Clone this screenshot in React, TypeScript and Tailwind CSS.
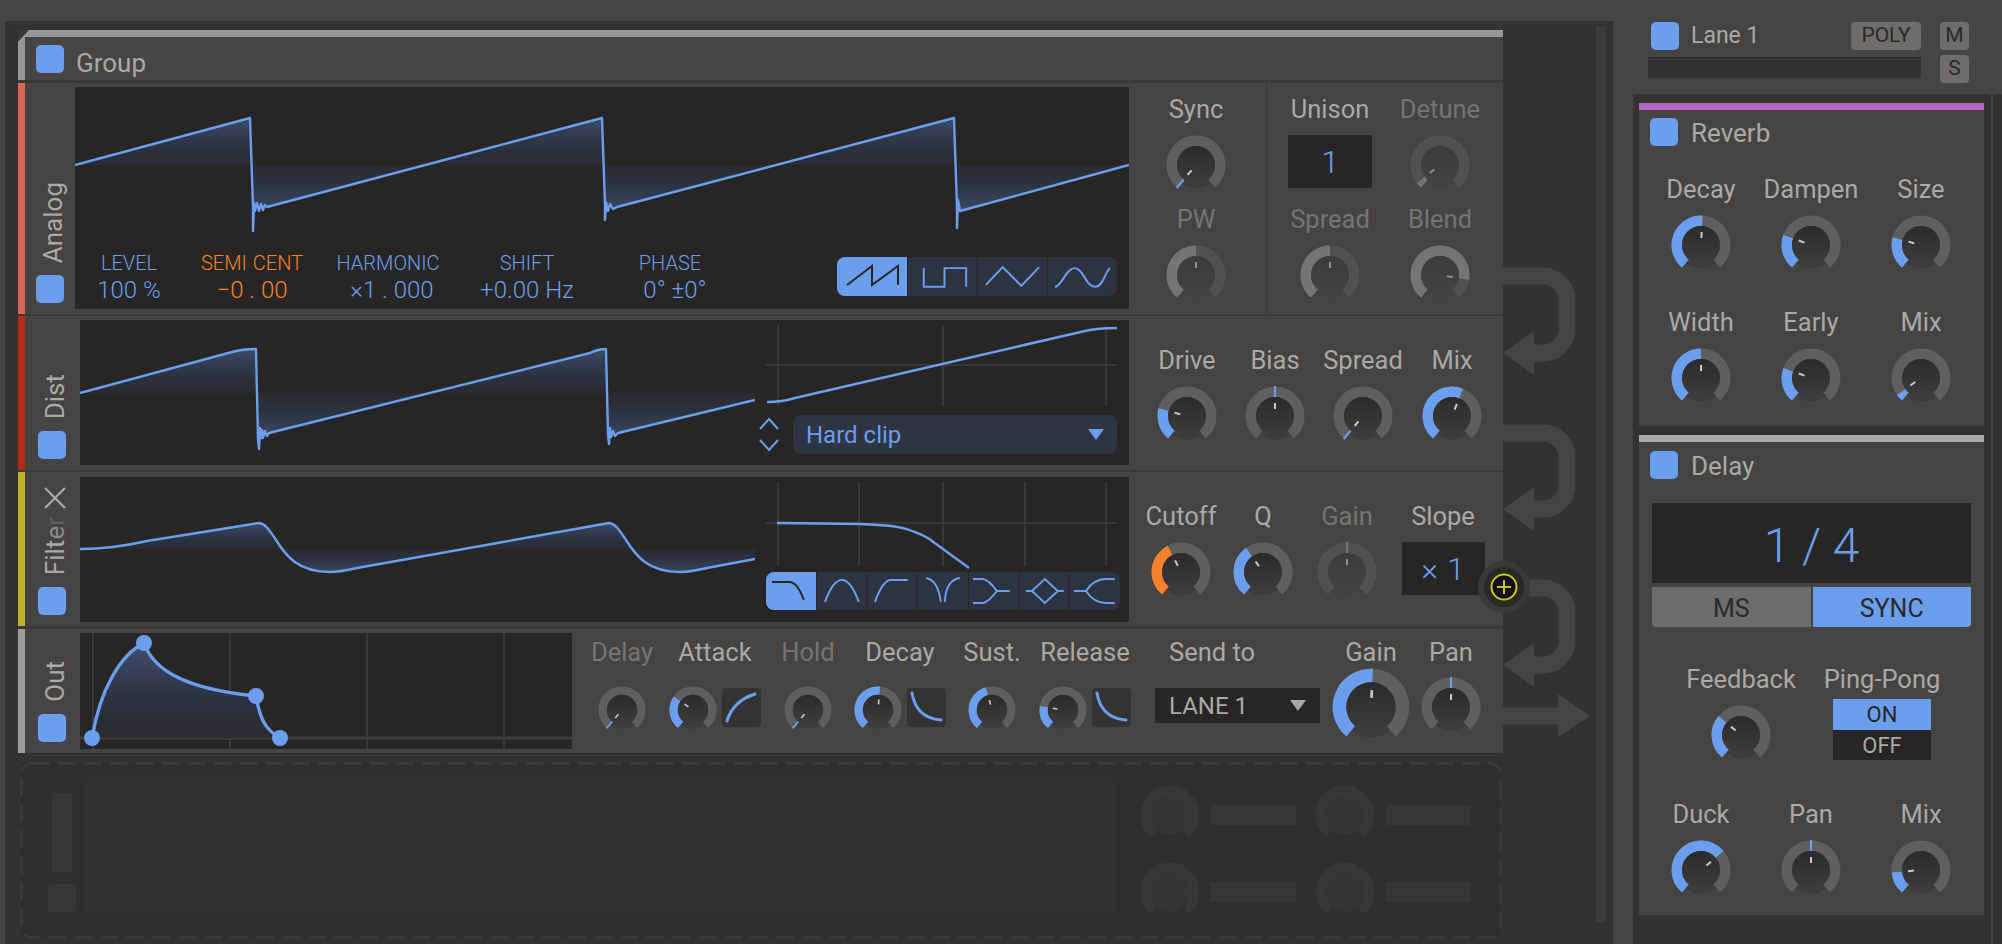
import { useId } from "react"

const BLUE = "#6b9eed"
const ORANGE = "#f5812b"
const DARK = "#272625"

function polar(r: number, deg: number) {
  const a = (deg * Math.PI) / 180
  return [r * Math.sin(a), -r * Math.cos(a)]
}

function arc(r: number, from: number, to: number) {
  const [x1, y1] = polar(r, from)
  const [x2, y2] = polar(r, to)
  const large = Math.abs(to - from) > 180 ? 1 : 0
  return `M${x1} ${y1} A${r} ${r} 0 ${large} 1 ${x2} ${y2}`
}

type Tone = "blue" | "orange" | "dim" | "ghost"

interface KnobProps {
  to?: number
  from?: number
  tone?: Tone
  tick?: boolean
  size?: "sm" | "md" | "lg"
}

function Knob({ to = -140, from = -140, tone = "blue", tick = false, size = "md" }: KnobProps) {
  const id = useId()
  const sizes = { sm: "w-[48px] h-[48px]", md: "w-[60px] h-[60px]", lg: "w-[78px] h-[78px]" }
  const dim = tone === "dim"
  const ghost = tone === "ghost"
  const track = ghost ? "#383736" : dim ? "#525150" : "#605f5e"
  const value = tone === "orange" ? ORANGE : dim ? "#767574" : BLUE
  const [t1x, t1y] = polar(7, to)
  const [t2x, t2y] = polar(13, to)
  const [m1x, m1y] = polar(19, to)
  const [m2x, m2y] = polar(30, to)
  return (
    <svg viewBox="-30 -30 60 60" className={`${sizes[size]} shrink-0 overflow-visible`}>
      <defs>
        <linearGradient id={id} x1="0" y1="0" x2="0" y2="1">
          <stop offset="0" stopColor={dim ? "#3c3b3a" : "#2c2b2b"} />
          <stop offset="1" stopColor={dim ? "#444342" : "#3d3c3b"} />
        </linearGradient>
      </defs>
      {ghost ? (
        <>
          <path d={arc(24.25, -140, 140)} fill="none" stroke={track} strokeWidth="10.5" />
          <circle r="20" fill="#363534" />
        </>
      ) : (
        <>
          <circle cy="1" r="22.5" fill={dim ? "#434241" : "#3d3c3b"} />
          <path d={arc(24.25, -140, 140)} fill="none" stroke={track} strokeWidth="10.5" />
          {!tick && to > from && <path d={arc(24.25, from, to)} fill="none" stroke={value} strokeWidth="10.5" />}
          {tick && <line x1={m1x} y1={m1y} x2={m2x} y2={m2y} stroke={value} strokeWidth="2.2" />}
          <circle r="19" fill={`url(#${id})`} />
          <line x1={t1x} y1={t1y} x2={t2x} y2={t2y} stroke={dim ? "#8f8f8d" : "#c9c9c7"} strokeWidth="2" />
        </>
      )}
    </svg>
  )
}

function Check() {
  return <div className="w-[28px] h-[28px] shrink-0 rounded-[5px] bg-[#6b9eed]" />
}

function Label({ text, dim = false }: { text: string; dim?: boolean }) {
  return (
    <div className={`h-[30px] leading-[30px] text-[25.5px] whitespace-nowrap ${dim ? "text-[#757473]" : "text-[#a9a9a7]"}`}>
      {text}
    </div>
  )
}

function KnobCell({ label, dim = false, width, ...knob }: KnobProps & { label: string; dim?: boolean; width?: string }) {
  return (
    <div className={`flex flex-col items-center ${width ?? ""}`}>
      <Label text={label} dim={dim} />
      <div className="mt-[11px]">
        <Knob {...knob} />
      </div>
    </div>
  )
}

interface WaveProps {
  box: string
  d: string
  x0: number
  x1: number
  mid: number
  top: number
  bottom: number
  className: string
}

function Wave({ box, d, x0, x1, mid, top, bottom, className }: WaveProps) {
  const id = useId()
  const m = (mid - top) / (bottom - top)
  return (
    <svg viewBox={box} className={`block ${className}`}>
      <defs>
        <linearGradient id={id} gradientUnits="userSpaceOnUse" x1="0" y1={top} x2="0" y2={bottom}>
          <stop offset="0" stopColor="#3b4a66" />
          <stop offset={m * 0.6} stopColor="#2c3241" />
          <stop offset={m} stopColor="#2a2b2f" />
          <stop offset={m + (1 - m) * 0.4} stopColor="#2c3241" />
          <stop offset="1" stopColor="#3b4a66" />
        </linearGradient>
      </defs>
      <path d={`${d} L${x1} ${mid} L${x0} ${mid} Z`} fill={`url(#${id})`} />
      <path d={d} fill="none" stroke={BLUE} strokeWidth="2.4" strokeLinejoin="round" />
    </svg>
  )
}

function Readout({ label, value, width, accent = "text-[#6b9eed]", nudge = "" }: { label: React.ReactNode; value: string; width: string; accent?: string; nudge?: string }) {
  return (
    <div className={`${width} flex flex-col items-center font-light whitespace-pre ${accent}`}>
      <div className="h-[20px] leading-[20px] text-[20px]">{label}</div>
      <div className={`mt-[5px] h-[24px] leading-[24px] text-[24px] ${nudge}`}>{value}</div>
    </div>
  )
}

const waveIcons = [
  "M10 28 L35 9 V28 L61 9 V28",
  "M16 11 V30 H37 V11 H59 V30",
  "M8 28 L25 10 L44 29 L62 10",
  "M7 30 C14 30 18 11 27 11 C36 11 38 30 48 30 C56 30 58 14 63 11",
]

const filterIcons = [
  "M6 10 H24 Q32 11 38 28",
  "M8 30 Q16 8 25 8 Q34 8 42 30",
  "M8 30 Q16 8 24 8 H41",
  "M8 6 Q20 8 23 30 M42 6 Q28 8 27 30",
  "M4 7 H14 Q20 8 28 19 H41 M4 31 H14 Q20 30 28 19",
  "M6 19 H12 L25 7 L38 19 H44 M12 19 L25 31 L38 19",
  "M4 19 H16 Q24 7 36 7 H45 M16 19 Q24 31 36 31 H45",
]

function WaveButtons() {
  return (
    <div className="ml-auto mr-[12px] mt-[4px] flex h-[39px] w-[280px] overflow-hidden rounded-[8px] bg-[#2e3342]">
      {waveIcons.map((d, i) => (
        <div key={d} className={`h-full w-[70px] ${i === 0 ? "bg-[#6b9eed]" : "border-l border-[#272625]"}`}>
          <svg viewBox="0 0 70 39" className="h-full w-full">
            <path d={d} fill="none" stroke={i === 0 ? DARK : BLUE} strokeWidth="2" />
          </svg>
        </div>
      ))}
    </div>
  )
}

function FilterButtons() {
  return (
    <div className="ml-[11px] mt-[2px] flex h-[38px] w-[354px] overflow-hidden rounded-[8px] bg-[#2e3342]">
      {filterIcons.map((d, i) => (
        <div key={d} className={`h-full flex-1 ${i === 0 ? "bg-[#6b9eed]" : "border-l border-[#272625]"}`}>
          <svg viewBox="0 0 50 38" className="h-full w-full">
            <path d={d} fill="none" stroke={i === 0 ? DARK : BLUE} strokeWidth="2" />
          </svg>
        </div>
      ))}
    </div>
  )
}

function CurveButton({ d }: { d: string }) {
  return (
    <div className="h-[39px] w-[39px] rounded-[4px] bg-[#343332]">
      <svg viewBox="0 0 39 39" className="h-full w-full">
        <path d={d} fill="none" stroke={BLUE} strokeWidth="3" strokeLinecap="round" />
      </svg>
    </div>
  )
}

function Side({ width, children }: { width: string; children: React.ReactNode }) {
  return <div className={`${width} flex shrink-0 flex-col items-center justify-end pb-[11px] pr-[1px]`}>{children}</div>
}

function SideText({ children }: { children: React.ReactNode }) {
  return (
    <div className="mb-[12px] ml-[6px] rotate-180 text-[26px] leading-[28px] text-[#a9a9a7] [writing-mode:vertical-rl]">
      {children}
    </div>
  )
}

function Arrow({ top, bottom, right = 1567 }: { top: number; bottom: number; right?: number }) {
  const r = 24
  return (
    <>
      <path
        d={`M1503 ${top} H${right - r} A${r} ${r} 0 0 1 ${right} ${top + r} V${bottom - r} A${r} ${r} 0 0 1 ${right - r} ${bottom} H1530`}
        fill="none"
        stroke="#454443"
        strokeWidth="17"
      />
      <polygon points={`1503,${bottom} 1534,${bottom - 22} 1534,${bottom + 22}`} fill="#454443" />
    </>
  )
}

function GhostRow() {
  return (
    <div className="flex items-center">
      <Knob tone="ghost" />
      <div className="ml-[11px] h-[20px] w-[85px] bg-[#373635]" />
    </div>
  )
}

export default function App() {
  return (
    <div className="flex h-[944px] w-[2002px] overflow-hidden bg-[#454443] font-['Roboto',sans-serif]">
      {/* left: the group and its routing */}
      <div className="flex w-[1613px] shrink-0 flex-col">
        <div className="h-[21px] shrink-0" />
        <div className="ml-[5px] flex flex-1 bg-[#333231]">
          <div className="ml-[13px] mt-[9px] flex w-[1485px] shrink-0 flex-col">
            <div className="bg-[#3a3938]">
              <div className="flex h-[50px] items-start gap-[12px] border-l-[7px] border-t-[7px] border-[#989897] bg-[#464544] pl-[11px] pt-[8px] [clip-path:polygon(11px_0,100%_0,100%_100%,0_100%,0_12px)]">
                <Check />
                <div className="text-[26px] leading-[36px] text-[#a9a9a7]">Group</div>
              </div>

              {/* Analog */}
              <div className="mt-[3px] flex h-[231px] bg-[#454443]">
                <div className="w-[7px] shrink-0 bg-[#d9675c]" />
                <Side width="w-[50px]">
                  <SideText>Analog</SideText>
                  <Check />
                </Side>
                <div className="mt-[4px] h-[222px] w-[1054px] shrink-0 bg-[#272625]">
                  <Wave
                    box="75 87 1054 166"
                    className="h-[166px] w-[1054px]"
                    x0={75}
                    x1={1129}
                    mid={165}
                    top={118}
                    bottom={212}
                    d="M75 165 L250 118 L253 207 L253 231 L254 203 L255 211 L257 203 L259 211 L261 204 L263 210 L265 205 L267 207 L602 118 L605 205 L605 220 L606 202 L608 211 L610 204 L613 209 L617 207 L954 118 L957 208 L957 228 L958 200 L960 211 L1129 165"
                  />
                  <div className="flex h-[56px]">
                    <Readout width="w-[108px]" label="LEVEL" value="100 %" />
                    <Readout
                      width="w-[138px]"
                      accent="text-[#f5812b]"
                      label={
                        <span className="flex gap-[6px]">
                          <span>SEMI</span>
                          <span>CENT</span>
                        </span>
                      }
                      value="−0 . 00"
                    />
                    <Readout width="w-[134px]" label="HARMONIC" value="×1 . 000" nudge="ml-[8px]" />
                    <Readout width="w-[144px]" label="SHIFT" value="+0.00 Hz" />
                    <Readout width="w-[142px]" label="PHASE" value="0° ±0°" nudge="ml-[10px]" />
                    <WaveButtons />
                  </div>
                </div>
                <div className="flex w-[134px] flex-col items-center pt-[11px]">
                  <KnobCell label="Sync" tick />
                  <div className="mt-[9px]">
                    <KnobCell label="PW" dim tone="dim" to={0} />
                  </div>
                </div>
                <div className="ml-[3px] h-full w-px bg-[#393837]" />
                <div className="flex w-[126px] flex-col items-center pt-[11px]">
                  <Label text="Unison" />
                  <div className="mb-[7px] mt-[11px] flex h-[53px] w-[84px] items-center justify-center bg-[#272625] text-[32px] font-light text-[#6b9eed]">
                    1
                  </div>
                  <div className="mt-[9px]">
                    <KnobCell label="Spread" dim tone="dim" to={0} />
                  </div>
                </div>
                <div className="flex w-[94px] flex-col items-center pt-[11px]">
                  <KnobCell label="Detune" dim tone="dim" to={-128} />
                  <div className="mt-[9px]">
                    <KnobCell label="Blend" dim tone="dim" to={100} />
                  </div>
                </div>
              </div>

              {/* Dist */}
              <div className="mt-[2px] flex h-[154px] bg-[#454443]">
                <div className="w-[7px] shrink-0 bg-[#b22b14]" />
                <Side width="w-[55px]">
                  <SideText>Dist</SideText>
                  <Check />
                </Side>
                <div className="mt-[4px] flex h-[145px] w-[1049px] shrink-0 bg-[#272625]">
                  <Wave
                    box="80 320 675 145"
                    className="h-[145px] w-[675px] shrink-0"
                    x0={80}
                    x1={755}
                    mid={393}
                    top={349}
                    bottom={440}
                    d="M80 393 L232 352 Q242 349 256 349 L258 440 L259 449 L260 428 L261 438 L262 430 L263 438 L265 431 L267 436 L269 433 L590 353 Q598 349 606 349 L608 435 L609 444 L610 428 L611 437 L613 431 L615 436 L618 433 L755 400"
                  />
                  <div className="flex flex-1 flex-col">
                    <svg viewBox="755 320 374 92" className="block h-[92px] w-[374px]">
                      <path d="M778 325 V406 M943 325 V406 M1106 325 V406 M766 365 H1117" stroke="#403f3e" strokeWidth="1.5" />
                      <path d="M767 402 Q782 402 795 398 L1085 331 Q1097 328 1117 328" fill="none" stroke={BLUE} strokeWidth="2.6" />
                    </svg>
                    <div className="mt-[3px] flex h-[39px] items-center">
                      <svg viewBox="0 0 38 39" className="h-[39px] w-[38px] shrink-0">
                        <path d="M5 15 L14 5 L23 15 M5 26 L14 36 L23 26" fill="none" stroke={BLUE} strokeWidth="2" transform="translate(0 -1)" />
                      </svg>
                      <div className="flex h-[39px] w-[324px] items-center justify-between rounded-[8px] bg-[#2f3443] pl-[13px] pr-[13px]">
                        <span className="text-[24px] text-[#6b9eed]">Hard clip</span>
                        <svg viewBox="0 0 16 11" className="h-[11px] w-[16px]">
                          <polygon points="0,0 16,0 8,11" fill={BLUE} />
                        </svg>
                      </div>
                    </div>
                  </div>
                </div>
                <div className="ml-[14px] flex pt-[29px]">
                  <KnobCell label="Drive" width="w-[88px]" to={-75} />
                  <KnobCell label="Bias" width="w-[88px]" to={0} tick />
                  <KnobCell label="Spread" width="w-[88px]" to={-140} tick />
                  <KnobCell label="Mix" width="w-[90px]" from={-140} to={22} />
                </div>
              </div>

              {/* Filter */}
              <div className="relative mt-[2px] flex h-[154px] bg-[#454443]">
                <div className="w-[7px] shrink-0 bg-[#c4b12a]" />
                <Side width="w-[55px]">
                  <svg viewBox="0 0 22 22" className="mb-[8px] ml-[6px] h-[22px] w-[22px]">
                    <path d="M1 1 L21 21 M21 1 L1 21" stroke="#a9a9a7" strokeWidth="2.2" />
                  </svg>
                  <SideText>
                    Filt<span className="text-[#8b8a89]">e</span>
                    <span className="text-[#5f5e5d]">r</span>
                  </SideText>
                  <Check />
                </Side>
                <div className="mt-[5px] flex h-[145px] w-[1049px] shrink-0 bg-[#272625]">
                  <Wave
                    box="80 477 675 145"
                    className="h-[145px] w-[675px] shrink-0"
                    x0={80}
                    x1={755}
                    mid={549}
                    top={523}
                    bottom={575}
                    d="M80 549 C105 549 125 546 147 541 L259 523 C266 524 270 531 276 540 C286 556 298 572 330 572 C340 572 348 570 357 568 L609 523 C616 524 620 531 626 540 C636 556 648 572 680 572 C690 572 698 570 707 568 L755 559"
                  />
                  <div className="flex flex-1 flex-col">
                    <svg viewBox="755 477 374 93" className="block h-[93px] w-[374px]">
                      <path d="M778 482 V566 M859 482 V566 M943 482 V566 M1025 482 V566 M1106 482 V566 M766 523 H1117" stroke="#403f3e" strokeWidth="1.5" />
                      <path d="M777 523 L860 524 C885 525 900 526 912 531 C920 534 926 536 932 541 L969 568" fill="none" stroke={BLUE} strokeWidth="2.4" />
                    </svg>
                    <FilterButtons />
                  </div>
                </div>
                <div className="ml-[11px] flex pt-[29px]">
                  <KnobCell label="Cutoff" width="w-[82px]" tone="orange" to={-27} />
                  <KnobCell label="Q" width="w-[82px]" to={-35} />
                  <KnobCell label="Gain" dim width="w-[86px]" tone="dim" to={0} tick />
                  <div className="flex w-[106px] flex-col items-center">
                    <Label text="Slope" />
                    <div className="mt-[11px] flex h-[53px] w-[83px] items-center justify-center gap-[9px] bg-[#272625] text-[32px] font-light text-[#6b9eed]">
                      <span>×</span>
                      <span>1</span>
                    </div>
                  </div>
                </div>
                <svg viewBox="-26 -26 52 52" className="absolute right-[-27px] top-[89px] h-[52px] w-[52px]">
                  <circle r="26" fill="#3a3938" />
                  <circle r="20" fill="#2a2928" />
                  <circle r="12.5" fill="#111" stroke="#c9c42b" strokeWidth="2" />
                  <path d="M-7 0 H7 M0 -7 V7" stroke="#c9c42b" strokeWidth="2" />
                </svg>
              </div>

              {/* Out */}
              <div className="mt-[3px] flex h-[124px] bg-[#454443]">
                <div className="w-[7px] shrink-0 bg-[#9c9c9a]" />
                <Side width="w-[55px]">
                  <SideText>Out</SideText>
                  <Check />
                </Side>
                <div className="mt-[4px] h-[116px] w-[492px] shrink-0 bg-[#272625]">
                  <svg viewBox="80 633 492 116" className="block h-[116px] w-[492px]">
                    <defs>
                      <linearGradient id="env" gradientUnits="userSpaceOnUse" x1="0" y1="643" x2="0" y2="738">
                        <stop offset="0" stopColor="#3f4f6e" />
                        <stop offset="0.55" stopColor="#2d3343" />
                        <stop offset="1" stopColor="#2a2b2f" />
                      </linearGradient>
                    </defs>
                    <path d="M93 633 V749 M230 633 V749 M367 633 V749 M504 633 V749" stroke="#403f3e" strokeWidth="1.5" />
                    <path d="M80 738 H572" stroke="#403f3e" strokeWidth="3" />
                    <path d="M92 738 C100 690 120 655 144 643 C152 665 175 688 256 696 C260 720 266 730 280 738 Z" fill="url(#env)" />
                    <path d="M92 738 C100 690 120 655 144 643 C152 665 175 688 256 696 C260 720 266 730 280 738" fill="none" stroke={BLUE} strokeWidth="3.4" />
                    <circle cx="92" cy="738" r="8" fill={BLUE} />
                    <circle cx="144" cy="643" r="8" fill={BLUE} />
                    <circle cx="256" cy="696" r="8" fill={BLUE} />
                    <circle cx="280" cy="738" r="8" fill={BLUE} />
                  </svg>
                </div>
                <div className="flex pt-[8px]">
                  <div className="ml-[26px] flex w-[48px] flex-col items-center">
                    <Label text="Delay" dim />
                    <div className="flex h-[80px] items-center pt-[5px]">
                      <Knob size="sm" tick />
                    </div>
                  </div>
                  <div className="ml-[23px] flex w-[92px] flex-col items-center">
                    <Label text="Attack" />
                    <div className="flex h-[80px] items-center gap-[5px]">
                      <div className="pt-[5px]">
                        <Knob size="sm" to={-55} />
                      </div>
                      <CurveButton d="M5 33 Q11 13 33 6" />
                    </div>
                  </div>
                  <div className="ml-[23px] flex w-[48px] flex-col items-center">
                    <Label text="Hold" dim />
                    <div className="flex h-[80px] items-center pt-[5px]">
                      <Knob size="sm" tick />
                    </div>
                  </div>
                  <div className="ml-[22px] flex w-[92px] flex-col items-center">
                    <Label text="Decay" />
                    <div className="flex h-[80px] items-center gap-[5px]">
                      <div className="pt-[5px]">
                        <Knob size="sm" to={5} />
                      </div>
                      <CurveButton d="M5 5 Q9 30 34 32" />
                    </div>
                  </div>
                  <div className="ml-[22px] flex w-[48px] flex-col items-center">
                    <Label text="Sust." />
                    <div className="flex h-[80px] items-center pt-[5px]">
                      <Knob size="sm" to={-15} />
                    </div>
                  </div>
                  <div className="ml-[23px] flex w-[92px] flex-col items-center">
                    <Label text="Release" />
                    <div className="flex h-[80px] items-center gap-[5px]">
                      <div className="pt-[5px]">
                        <Knob size="sm" to={-80} />
                      </div>
                      <CurveButton d="M5 5 Q9 30 34 32" />
                    </div>
                  </div>
                  <div className="ml-[24px] flex w-[165px] flex-col items-start">
                    <div className="ml-[14px]">
                      <Label text="Send to" />
                    </div>
                    <div className="mt-[21px] flex h-[35px] w-[165px] items-center justify-between bg-[#272625] pl-[14px] pr-[14px]">
                      <span className="text-[24px] text-[#a9a9a7]">LANE 1</span>
                      <svg viewBox="0 0 16 11" className="h-[11px] w-[16px]">
                        <polygon points="0,0 16,0 8,11" fill="#a9a9a7" />
                      </svg>
                    </div>
                  </div>
                  <div className="ml-[12px] flex w-[78px] flex-col items-center">
                    <Label text="Gain" />
                    <div className="flex h-[80px] items-center">
                      <Knob size="lg" to={3} />
                    </div>
                  </div>
                  <div className="ml-[11px] flex w-[60px] flex-col items-center">
                    <Label text="Pan" />
                    <div className="flex h-[80px] items-center">
                      <Knob to={0} tick />
                    </div>
                  </div>
                </div>
              </div>
            </div>

            {/* empty slot */}
            <div className="relative ml-[2px] mt-[9px] flex h-[177px] w-[1482px] bg-[#302f2e] pt-[15px]">
              <svg className="absolute inset-0 h-full w-full">
                <rect x="1.5" y="1.5" width="1479" height="174" rx="10" fill="none" stroke="#3b3a39" strokeWidth="3" strokeDasharray="18 8" />
              </svg>
              <div className="ml-[18px] flex w-[47px] flex-col items-center">
                <div className="ml-[1px] mt-[16px] h-[79px] w-[20px] bg-[#383736]" />
                <div className="mt-[12px] h-[28px] w-[28px] rounded-[4px] bg-[#383736]" />
              </div>
              <div className="h-[136px] w-[1032px] bg-[#323130]" />
              <div className="ml-[23px] flex flex-col gap-[17px] pt-[8px]">
                <GhostRow />
                <GhostRow />
              </div>
              <div className="ml-[19px] flex flex-col gap-[17px] pt-[8px]">
                <GhostRow />
                <GhostRow />
              </div>
            </div>
          </div>

          {/* gutter with routing arrows */}
          <svg viewBox="1503 21 93 923" className="block h-[923px] w-[93px] shrink-0">
            <Arrow top={276} bottom={353} />
            <Arrow top={433} bottom={509} />
            <Arrow top={588} bottom={665} />
            <path d="M1503 716 H1560" stroke="#454443" strokeWidth="17" />
            <polygon points="1558,694 1590,716 1558,737" fill="#454443" />
          </svg>
          <div className="mb-[22px] mt-[5px] w-[10px] bg-[#3d3c3b]" />
        </div>
      </div>

      {/* right: lane and its effects */}
      <div className="flex w-[389px] shrink-0 flex-col">
        <div className="flex h-[94px] shrink-0 pl-[35px]">
          <div className="w-[273px]">
            <div className="ml-[3px] mt-[22px] flex h-[28px] items-center">
              <Check />
              <span className="ml-[12px] text-[23px] text-[#a9a9a7]">Lane 1</span>
            </div>
            <div className="mt-[7px] h-[21px] bg-[#333231]" />
          </div>
          <div className="ml-[-70px] mt-[22px] flex h-[28px] w-[70px] items-center justify-center rounded-[4px] bg-[#6e6d6c] text-[21px] text-[#2a2a2a]">
            POLY
          </div>
          <div className="ml-[19px] mt-[22px] flex flex-col gap-[5px]">
            <div className="flex h-[28px] w-[29px] items-center justify-center rounded-[4px] bg-[#6e6d6c] text-[21px] text-[#2a2a2a]">M</div>
            <div className="flex h-[28px] w-[29px] items-center justify-center rounded-[4px] bg-[#6e6d6c] text-[21px] text-[#2a2a2a]">S</div>
          </div>
        </div>
        <div className="flex flex-1 pl-[20px]">
          <div className="w-[358px] bg-[#333231] px-[6px] pt-[9px]">
            <div className="h-[323px] w-[345px] bg-[#454443]">
              <div className="h-[7px] bg-[#b364c4]" />
              <div className="ml-[11px] mt-[8px] flex h-[28px] items-center gap-[13px]">
                <Check />
                <span className="pt-[2px] text-[26px] leading-[28px] text-[#a9a9a7]">Reverb</span>
              </div>
              <div className="ml-[7px] mt-[28px] grid w-[330px] grid-cols-3 gap-y-[32px]">
                <KnobCell label="Decay" to={3} />
                <KnobCell label="Dampen" to={-70} />
                <KnobCell label="Size" to={-75} />
                <KnobCell label="Width" to={0} />
                <KnobCell label="Early" to={-70} />
                <KnobCell label="Mix" to={-125} />
              </div>
            </div>
            <div className="mt-[9px] h-[480px] w-[345px] bg-[#454443]">
              <div className="h-[7px] bg-[#a9a9a7]" />
              <div className="ml-[11px] mt-[9px] flex h-[28px] items-center gap-[13px]">
                <Check />
                <span className="pt-[2px] text-[26px] leading-[28px] text-[#a9a9a7]">Delay</span>
              </div>
              <div className="ml-[13px] mt-[24px] w-[319px]">
                <div className="flex h-[80px] items-center justify-center bg-[#272625] pt-[5px] text-[48px] font-light text-[#6b9eed]">1 / 4</div>
                <div className="mt-[4px] flex h-[40px] gap-[2px] overflow-hidden rounded-b-[4px] text-[25px] text-[#2a2a2a]">
                  <div className="flex flex-1 items-center justify-center bg-[#6e6d6c] pt-[3px]">MS</div>
                  <div className="flex flex-1 items-center justify-center bg-[#6b9eed] pt-[3px]">SYNC</div>
                </div>
              </div>
              <div className="ml-[7px] mt-[37px] flex">
                <KnobCell label="Feedback" width="w-[190px]" to={-50} />
                <div className="ml-[-14px] flex w-[120px] flex-col items-center">
                  <Label text="Ping-Pong" />
                  <div className="mt-[5px] flex h-[31px] w-[98px] items-center justify-center bg-[#6b9eed] text-[22px] text-[#272625]">ON</div>
                  <div className="flex h-[30px] w-[98px] items-center justify-center bg-[#272625] text-[22px] text-[#a9a9a7]">OFF</div>
                </div>
              </div>
              <div className="ml-[7px] mt-[34px] grid w-[330px] grid-cols-3">
                <KnobCell label="Duck" to={50} />
                <KnobCell label="Pan" to={0} tick />
                <KnobCell label="Mix" to={-95} />
              </div>
            </div>
          </div>
          <div className="w-[2px]" />
          <div className="flex-1 bg-[#333231]" />
        </div>
      </div>
    </div>
  )
}
